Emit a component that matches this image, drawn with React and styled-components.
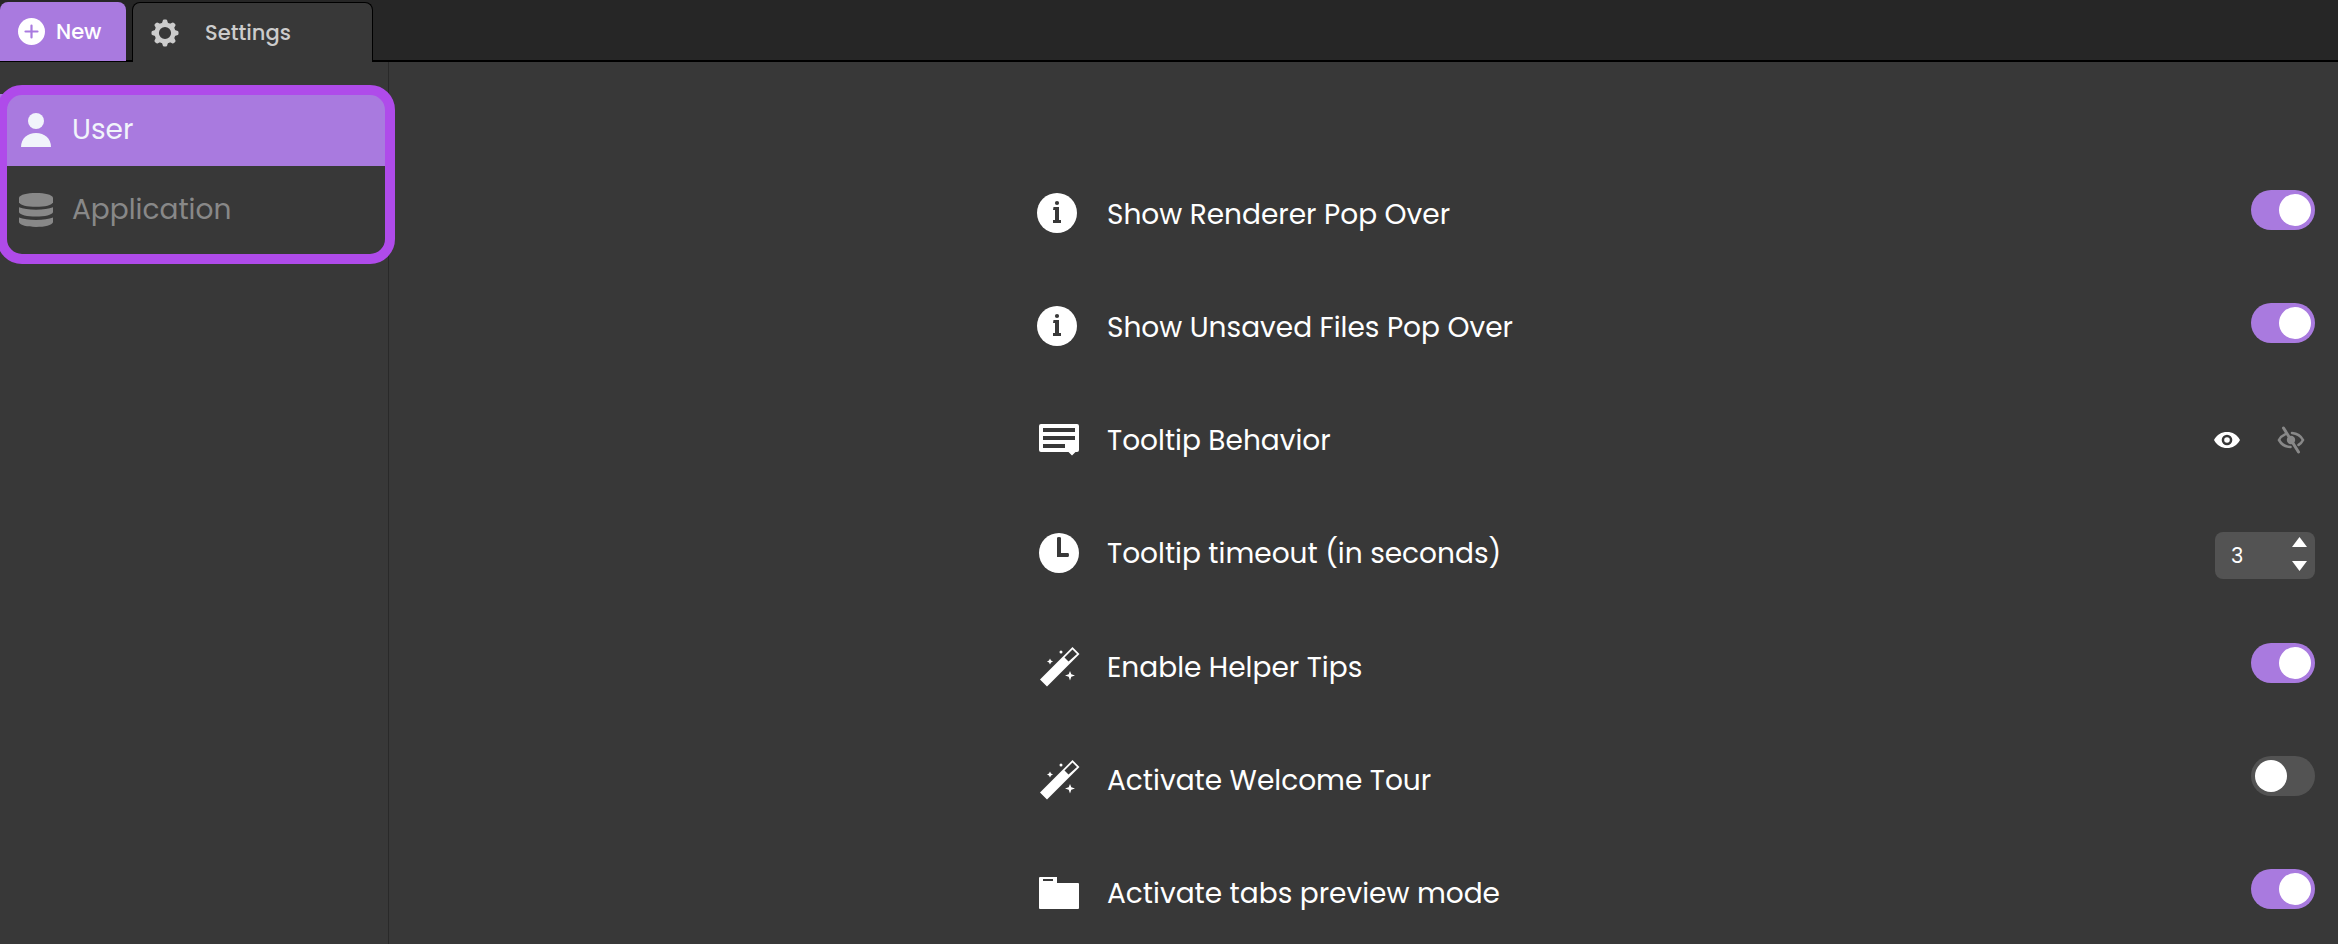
import React, { useState } from "react";
import styled, { createGlobalStyle } from "styled-components";

const c = {
  bg: "#383838",
  bar: "#262626",
  purple: "#a97adf",
  frame: "#af4bea",
  field: "#535353",
  muted: "#888888",
};

const GlobalStyle = createGlobalStyle`
  * { box-sizing: border-box; }
  body {
    margin: 0;
    background: ${c.bg};
    color: #fff;
    font-family: Poppins, Inter, "Open Sans", sans-serif;
  }
  button, input { font: inherit; color: inherit; }
`;

const Page = styled.div`
  display: flex;
  flex-direction: column;
  min-height: 100vh;
  overflow: hidden;
`;

const TabBar = styled.header`
  display: flex;
  align-items: stretch;
  height: 62px;
  padding-top: 2px;
  background: linear-gradient(#000, #000) bottom / 100% 2px no-repeat ${c.bar};
`;

const NewButton = styled.button`
  display: flex;
  align-items: center;
  gap: 11px;
  width: 126px;
  margin: 0 6px 1px 0;
  padding: 0 0 0 18px;
  border: 0;
  border-radius: 8px 8px 0 0;
  background: ${c.purple};
  font-size: 21px;
  font-weight: 500;
  cursor: pointer;
`;

const Tab = styled.button`
  display: flex;
  align-items: center;
  gap: 26px;
  width: 241px;
  padding: 0 0 0 18px;
  border: 1px solid #000;
  border-bottom: 0;
  border-radius: 8px 8px 0 0;
  background: ${c.bg};
  color: #cccccc;
  font-size: 21px;
  font-weight: 500;
  cursor: pointer;
`;

const Body = styled.div`
  display: flex;
  flex: 1;
`;

const Sidebar = styled.aside`
  flex: none;
  width: 389px;
  padding-top: 32px;
  border-right: 1px solid #292929;
`;

const Nav = styled.nav`
  position: relative;
  display: flex;
  flex-direction: column;
  gap: 8px;
`;

const NavItem = styled.a`
  display: flex;
  align-items: center;
  gap: 19px;
  height: 72px;
  padding-left: 19px;
  background: ${(p) => (p.$active ? c.purple : "transparent")};
  color: ${(p) => (p.$active ? "#f1f4fb" : c.muted)};
  font-size: 28px;
  font-weight: 400;
  text-decoration: none;
`;

const FocusFrame = styled.div`
  position: absolute;
  inset: -9px -7px -18px -3px;
  border: 10px solid ${c.frame};
  border-radius: 25px;
  pointer-events: none;
`;

const Main = styled.main`
  display: grid;
  grid-template-columns: 1fr 2fr;
  flex: 1;
  padding: 128px 23px 24px 0;
`;

const Settings = styled.div`
  grid-column: 2;
  display: flex;
  flex-direction: column;
  gap: 67px;
  padding-left: 5px;
`;

const Row = styled.div`
  display: flex;
  align-items: center;
  gap: 27px;
  min-height: 46px;
`;

const Label = styled.label`
  flex: 1;
  padding-top: 3px;
  font-size: 28px;
  line-height: 40px;
`;

const Toggle = styled.input`
  appearance: none;
  width: 64px;
  height: 40px;
  margin: 0 0 6px;
  padding: 4px;
  border-radius: 20px;
  background: ${c.field};
  cursor: pointer;

  &::before {
    content: "";
    display: block;
    width: 32px;
    height: 32px;
    border-radius: 50%;
    background: #fff;
  }
  &:checked { background: ${c.purple}; }
  &:checked::before { margin-left: 24px; }
`;

const EyeGroup = styled.div`
  display: flex;
  gap: 32px;
  padding: 2px 8px 0 0;
`;

const EyeButton = styled.button`
  display: flex;
  padding: 0;
  border: 0;
  background: none;
  color: ${(p) => (p.$active ? "#fff" : c.muted)};
  cursor: pointer;
`;

const Stepper = styled.div`
  display: flex;
  width: 100px;
  height: 47px;
  margin: 3px 0 -3px;
  border-radius: 8px;
  background: ${c.field};
`;

const NumberField = styled.input`
  flex: 1;
  min-width: 0;
  padding: 0 0 0 16px;
  border: 0;
  outline: 0;
  background: none;
  font-size: 21px;
  appearance: textfield;
  &::-webkit-inner-spin-button { appearance: none; margin: 0; }
`;

const Arrows = styled.div`
  display: flex;
  flex-direction: column;
  justify-content: space-between;
  padding: 5px 8px 8px 0;
`;

const ArrowButton = styled.button`
  display: flex;
  padding: 0;
  border: 0;
  background: none;
  cursor: pointer;
`;

const Icon = styled.svg`
  display: block;
  flex: none;
  fill: currentColor;
`;

const PlusIcon = () => (
  <Icon width="27" height="27" viewBox="0 0 27 27" aria-hidden="true">
    <circle cx="13.5" cy="13.5" r="13.5" />
    <path d="M13.5 7.500v12M7.500 13.500h12" stroke={c.purple} strokeWidth="2.200" strokeLinecap="round" />
  </Icon>
);

const GearIcon = () => (
  <Icon width="28" height="28" viewBox="-14 -14 28 28" aria-hidden="true">
    <circle r="8.300" fill="none" stroke="currentColor" strokeWidth="4.400" />
    {[0, 45, 90, 135, 180, 225, 270, 315].map((a) => (
      <path key={a} transform={`rotate(${a})`} d="M-3.8-9.2C-2.8-10-2.6-10.8-2.3-12.2Q-2-13.5-.8-13.5H.8Q2-13.5 2.3-12.2C2.6-10.8 2.8-10 3.8-9.2Z" />
    ))}
  </Icon>
);

const UserIcon = () => (
  <Icon width="34" height="34" viewBox="0 0 34 34" aria-hidden="true">
    <circle cx="17" cy="8" r="8" />
    <path d="M2 34C2 25.500 8.500 20 17 20S32 25.500 32 34Z" />
  </Icon>
);

const DatabaseIcon = () => (
  <Icon width="34" height="34" viewBox="0 0 34 34" aria-hidden="true">
    <path d="M0 4.600C1 1.700 8 0 17 0S33 1.700 34 4.600V9.200C33 12.100 26 13.800 17 13.800S1 12.100 0 9.200Z" />
    <path d="M0 14.300C4 15.900 10 16.800 17 16.800S30 15.900 34 14.300V19.200C33 22 26 23.600 17 23.600S1 22 0 19.200Z" />
    <path d="M0 24.400C4 26 10 26.900 17 26.900S30 26 34 24.400V29.300C33 32.200 26 34 17 34S1 32.200 0 29.300Z" />
  </Icon>
);

const RowIcon = ({ children }) => (
  <Icon width="44" height="44" viewBox="0 0 44 44" aria-hidden="true">{children}</Icon>
);

const InfoIcon = () => (
  <RowIcon>
    <circle cx="21" cy="22" r="20" />
    <circle cx="21" cy="12" r="2.100" fill={c.bg} />
    <path d="M17.500 16H23V29H25V32H17V29H19V19H17Z" fill={c.bg} />
  </RowIcon>
);

const CommentIcon = () => (
  <RowIcon>
    <path fillRule="evenodd" d="M5 7H41Q43 7 43 9V33Q43 35 41 35H39.500L36 38.500 32.500 35H5Q3 35 3 33V9Q3 7 5 7ZM7 11V15H39V11ZM7 19V23H39V19ZM7 27V31H29V27Z" />
  </RowIcon>
);

const ClockIcon = () => (
  <RowIcon>
    <circle cx="23" cy="22" r="20" />
    <path d="M21 7Q21 6 23 6T25 7V22H32Q33 22 33 24T32 26H21Z" fill={c.bg} />
  </RowIcon>
);

const WandIcon = () => (
  <RowIcon>
    <path fillRule="evenodd" d="M4 35.500 36.500 3 43.500 10 11 42.500ZM28.500 13.500 32.500 17.500 41 10 36.500 5.500Z" />
    <path d="M34 27 35.300 30.200 39 31.500 35.300 32.800 34 36.500 32.700 32.800 29 31.500 32.700 30.200Z" />
    <path d="M14 14.500 15 16.500 17 17.500 15 18.500 14 20.500 13 18.500 11 17.500 13 16.500Z" />
    <circle cx="25" cy="8" r="1.500" />
  </RowIcon>
);

const FolderIcon = () => (
  <RowIcon>
    <path fillRule="evenodd" d="M4 7H21V13H42Q43 13 43 14V38Q43 39 42 39H4Q3 39 3 38V8Q3 7 4 7ZM7 9V11H17V9Z" />
  </RowIcon>
);

const EyeIcon = () => (
  <Icon width="32" height="32" viewBox="-16 -16 32 32" aria-hidden="true">
    <path d="M-13 0C-10-5.500-5.500-8 0-8S10-5.500 13 0C10 5.500 5.500 8 0 8S-10 5.500-13 0Z" />
    <circle r="5.300" fill={c.bg} />
    <circle r="2.800" />
  </Icon>
);

const EyeOffIcon = () => (
  <Icon width="32" height="32" viewBox="-16 -16 32 32" aria-hidden="true" strokeLinecap="round">
    <path d="M-6-5.600C-8.800-4.400-10.800-2.500-12 0-9.500 4.500-5.500 6.900-.5 7M1-7C6.500-6.500 9.800-4.300 12 0 10.800 2.400 9 4.300 7.500 5" fill="none" stroke="currentColor" strokeWidth="2.600" />
    <circle r="4.200" />
    <path d="M-7.500-12 7.500 12" stroke="currentColor" strokeWidth="3" />
  </Icon>
);

const Arrow = ({ down }) => (
  <Icon width="15" height="10" viewBox="0 0 15 10" aria-hidden="true">
    <path d={down ? "M0 0H15L7.500 10Z" : "M0 10H15L7.500 0Z"} />
  </Icon>
);

const settings = [
  { id: "renderer", label: "Show Renderer Pop Over", icon: InfoIcon, on: true },
  { id: "unsaved", label: "Show Unsaved Files Pop Over", icon: InfoIcon, on: true },
  { id: "behavior", label: "Tooltip Behavior", icon: CommentIcon, kind: "eyes" },
  { id: "timeout", label: "Tooltip timeout (in seconds)", icon: ClockIcon, kind: "number" },
  { id: "tips", label: "Enable Helper Tips", icon: WandIcon, on: true },
  { id: "tour", label: "Activate Welcome Tour", icon: WandIcon, on: false },
  { id: "preview", label: "Activate tabs preview mode", icon: FolderIcon, on: true },
];

function Eyes({ id }) {
  const [visible, setVisible] = useState(true);
  return (
    <EyeGroup role="group" aria-labelledby={`${id}-label`}>
      <EyeButton type="button" aria-label="Show tooltips" aria-pressed={visible} $active={visible} onClick={() => setVisible(true)}>
        <EyeIcon />
      </EyeButton>
      <EyeButton type="button" aria-label="Hide tooltips" aria-pressed={!visible} $active={!visible} onClick={() => setVisible(false)}>
        <EyeOffIcon />
      </EyeButton>
    </EyeGroup>
  );
}

function Timeout({ id }) {
  const [value, setValue] = useState(3);
  return (
    <Stepper>
      <NumberField id={id} type="number" min="0" value={value} onChange={(e) => setValue(Number(e.target.value))} />
      <Arrows>
        <ArrowButton type="button" aria-label="Increase" onClick={() => setValue(value + 1)}><Arrow /></ArrowButton>
        <ArrowButton type="button" aria-label="Decrease" onClick={() => setValue(Math.max(0, value - 1))}><Arrow down /></ArrowButton>
      </Arrows>
    </Stepper>
  );
}

function Setting({ id, label, icon: Glyph, kind, on }) {
  return (
    <Row>
      <Glyph />
      <Label id={`${id}-label`} as={kind === "eyes" ? "span" : "label"} htmlFor={kind === "eyes" ? undefined : id}>
        {label}
      </Label>
      {kind === "eyes" && <Eyes id={id} />}
      {kind === "number" && <Timeout id={id} />}
      {!kind && <Toggle id={id} type="checkbox" defaultChecked={on} />}
    </Row>
  );
}

export default function App() {
  return (
    <Page>
      <GlobalStyle />
      <TabBar>
        <NewButton type="button"><PlusIcon />New</NewButton>
        <Tab type="button"><GearIcon />Settings</Tab>
      </TabBar>
      <Body>
        <Sidebar>
          <Nav>
            <NavItem href="#user" $active aria-current="page"><UserIcon />User</NavItem>
            <NavItem href="#application"><DatabaseIcon />Application</NavItem>
            <FocusFrame />
          </Nav>
        </Sidebar>
        <Main>
          <Settings>
            {settings.map((s) => <Setting key={s.id} {...s} />)}
          </Settings>
        </Main>
      </Body>
    </Page>
  );
}
